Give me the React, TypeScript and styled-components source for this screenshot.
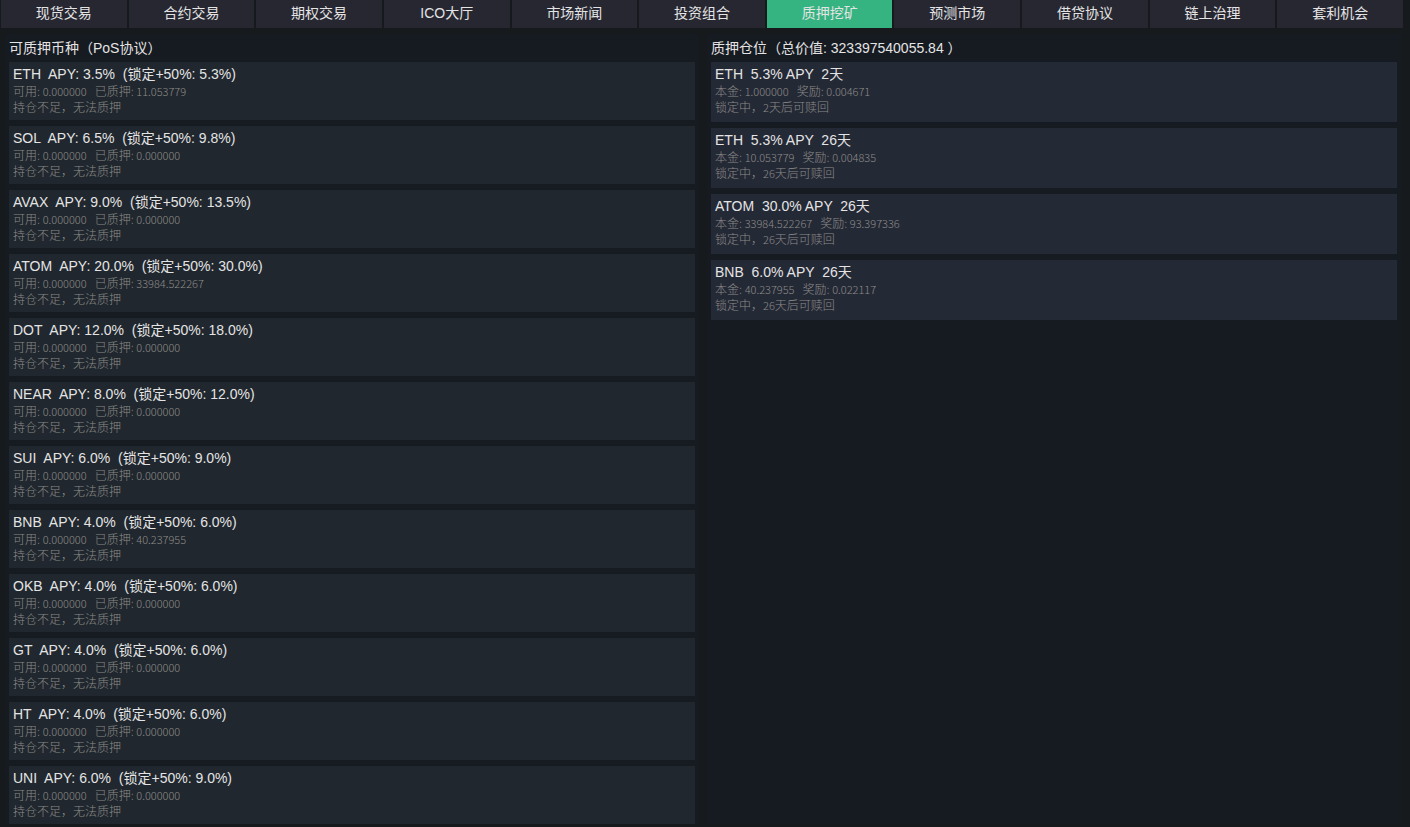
import React from 'react';
import styled, { createGlobalStyle } from 'styled-components';

const GlobalStyle = createGlobalStyle`
  * { box-sizing: border-box; }
  body {
    margin: 0;
    background: #171a1c;
    color: #e4e4e4;
    font-family: 'Liberation Sans', 'Noto Sans CJK SC', sans-serif;
    font-size: 14px;
  }
`;

const Page = styled.div`
  display: flex;
  flex-direction: column;
  min-height: 100vh;
  padding-bottom: 3px;
`;

const TabBar = styled.nav`
  display: flex;
  gap: 2px;
  padding: 0 7px 0 1px;
`;

const Tab = styled.button<{ $active: boolean }>`
  flex: 1 1 0;
  min-width: 0;
  height: 28px;
  padding: 0 0 2px;
  border: 0;
  background: ${(p) => (p.$active ? '#35b380' : '#272732')};
  color: #e4e4e4;
  font: inherit;
  line-height: 26px;
  white-space: nowrap;
  cursor: pointer;
`;

const Columns = styled.main`
  flex: 1;
  display: grid;
  grid-template-columns: 1fr 1fr;
  gap: 8px;
  padding: 6px 9px 0 5px;
`;

const Panel = styled.section`
  background: #161a21;
  padding: 4px 4px 0;
`;

const Heading = styled.h2`
  margin: 0 0 4px;
  font-size: 14px;
  font-weight: 400;
  line-height: 20px;
  white-space: pre;
`;

const List = styled.ul`
  display: flex;
  flex-direction: column;
  gap: 6px;
  margin: 0;
  padding: 0;
  list-style: none;
`;

const Card = styled.li<{ $kind: 'coin' | 'position' }>`
  padding: 4px 4px ${(p) => (p.$kind === 'coin' ? 5 : 7)}px;
  background: ${(p) => (p.$kind === 'coin' ? '#20272e' : '#242936')};
`;

const CardTitle = styled.h3`
  height: 16px;
  margin: 0 0 1px;
  font-size: 14px;
  font-weight: 400;
  line-height: 16px;
  white-space: pre;
`;

const Detail = styled.p`
  height: 16px;
  margin: 0;
  color: #8c8b88;
  font-family: 'Noto Sans CJK SC', sans-serif;
  font-size: 12px;
  font-weight: 300;
  line-height: 16px;
  white-space: pre;
`;

const Num = styled.span`
  font-size: 11px;
`;

const Field = styled.span`
  margin-right: 8px;
`;

const tabs = ['现货交易', '合约交易', '期权交易', 'ICO大厅', '市场新闻', '投资组合', '质押挖矿', '预测市场', '借贷协议', '链上治理', '套利机会'];

const coins = [
  ['ETH', '3.5', '5.3', '11.053779'],
  ['SOL', '6.5', '9.8', '0.000000'],
  ['AVAX', '9.0', '13.5', '0.000000'],
  ['ATOM', '20.0', '30.0', '33984.522267'],
  ['DOT', '12.0', '18.0', '0.000000'],
  ['NEAR', '8.0', '12.0', '0.000000'],
  ['SUI', '6.0', '9.0', '0.000000'],
  ['BNB', '4.0', '6.0', '40.237955'],
  ['OKB', '4.0', '6.0', '0.000000'],
  ['GT', '4.0', '6.0', '0.000000'],
  ['HT', '4.0', '6.0', '0.000000'],
  ['UNI', '6.0', '9.0', '0.000000'],
];

const positions = [
  ['ETH', '5.3', '2', '1.000000', '0.004671'],
  ['ETH', '5.3', '26', '10.053779', '0.004835'],
  ['ATOM', '30.0', '26', '33984.522267', '93.397336'],
  ['BNB', '6.0', '26', '40.237955', '0.022117'],
];

function Amount({ label, value }: { label: string; value: string }) {
  return (
    <Field>
      {label}: <Num>{value}</Num>
    </Field>
  );
}

export default function App() {
  return (
    <Page>
      <GlobalStyle />
      <TabBar>
        {tabs.map((name) => (
          <Tab key={name} type="button" $active={name === '质押挖矿'}>{name}</Tab>
        ))}
      </TabBar>
      <Columns>
        <Panel>
          <Heading>可质押币种（PoS协议）</Heading>
          <List>
            {coins.map(([symbol, apy, locked, staked]) => (
              <Card key={symbol} $kind="coin">
                <CardTitle>{`${symbol}  APY: ${apy}%  (锁定+50%: ${locked}%)`}</CardTitle>
                <Detail>
                  <Amount label="可用" value="0.000000" />
                  <Amount label="已质押" value={staked} />
                </Detail>
                <Detail>持仓不足，无法质押</Detail>
              </Card>
            ))}
          </List>
        </Panel>
        <Panel>
          <Heading>质押仓位（总价值: 323397540055.84 ）</Heading>
          <List>
            {positions.map(([symbol, apy, days, principal, reward]) => (
              <Card key={symbol + days} $kind="position">
                <CardTitle>{`${symbol}  ${apy}% APY  ${days}天`}</CardTitle>
                <Detail>
                  <Amount label="本金" value={principal} />
                  <Amount label="奖励" value={reward} />
                </Detail>
                <Detail>锁定中，<Num>{days}</Num>天后可赎回</Detail>
              </Card>
            ))}
          </List>
        </Panel>
      </Columns>
    </Page>
  );
}
